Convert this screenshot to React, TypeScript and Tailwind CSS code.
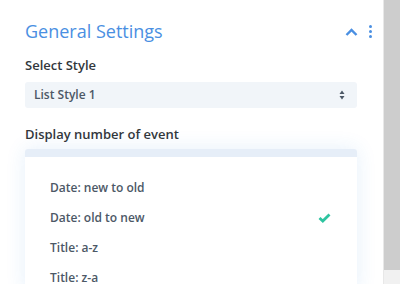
import React from 'react';

function App() {
    const options = [
        { label: 'Date: new to old', checked: false },
        { label: 'Date: old to new', checked: true },
        { label: 'Title: a-z', checked: false },
        { label: 'Title: z-a', checked: false },
    ];

    return (
        <div className="w-[400px] h-[284px] overflow-hidden flex bg-white" style={{ fontFamily: '"Open Sans", sans-serif' }}>
            {/* Panel */}
            <div className="w-[383px] flex flex-col">
                <div className="h-[4px] w-[381px] bg-[#f1f5f9]" />

                <div className="px-[25px] pt-[19px]">
                    {/* Header */}
                    <div className="flex items-center justify-between h-[24px] mr-[-14px]">
                        <p className="text-[18px] text-[#4a8fe2] leading-none">General Settings</p>
                        <div className="flex items-center gap-[11px]">
                            <svg width="13" height="9" viewBox="0 0 13 9" className="mt-[2px]">
                                <path d="M1.5 7 L6.5 2 L11.5 7" fill="none" stroke="#4a8fe2" strokeWidth="2.4" />
                            </svg>
                            <div className="flex flex-col gap-[2px]">
                                <span className="w-[3px] h-[3px] rounded-full bg-[#4a8fe2]" />
                                <span className="w-[3px] h-[3px] rounded-full bg-[#4a8fe2]" />
                                <span className="w-[3px] h-[3px] rounded-full bg-[#4a8fe2]" />
                            </div>
                        </div>
                    </div>

                    {/* Select Style */}
                    <p className="mt-[13px] text-[13px] font-semibold text-[#32373c] leading-[18px]">Select Style</p>
                    <div className="mt-[8px] h-[26px] w-[332px] bg-[#f1f5f9] rounded-[3px] flex items-center justify-between px-[9px]">
                        <span className="text-[12px] font-semibold text-[#4c5866]">List Style 1</span>
                        <svg width="6" height="10" viewBox="0 0 6 10" className="mr-[3px]">
                            <path d="M3 0.5 L5.5 4 L0.5 4 Z" fill="#4c5866" />
                            <path d="M3 9.5 L5.5 6 L0.5 6 Z" fill="#4c5866" />
                        </svg>
                    </div>

                    {/* Display number of event */}
                    <p className="mt-[17px] text-[13px] font-semibold text-[#32373c] leading-[18px]">Display number of event</p>

                    {/* Dropdown */}
                    <div className="mt-[6px] w-[332px] rounded-[3px] bg-white shadow-[0_0_20px_rgba(43,135,218,0.12)] overflow-hidden">
                        <div className="h-[8px] bg-[#e6eef8]" />
                        <div className="pt-[16px] flex flex-col">
                            {options.map((opt, index) => (
                                <div key={index} className="h-[30px] flex items-center justify-between pl-[25px] pr-[26px]">
                                    <span className="text-[12px] font-semibold text-[#4c5866]">{opt.label}</span>
                                    {opt.checked && (
                                        <svg width="13" height="10" viewBox="0 0 13 10">
                                            <path d="M1.5 5 L4.8 8 L11.5 1.5" fill="none" stroke="#2ec4a0" strokeWidth="2.8" />
                                        </svg>
                                    )}
                                </div>
                            ))}
                        </div>
                    </div>
                </div>
            </div>

            {/* Scrollbar */}
            <div className="w-[17px] flex flex-col border-l border-[#e8e8e8]">
                <div className="h-[270px] bg-[#cdcdcd]" />
                <div className="flex-1 bg-[#f1f1f1]" />
            </div>
        </div>
    );
}

export default App;
